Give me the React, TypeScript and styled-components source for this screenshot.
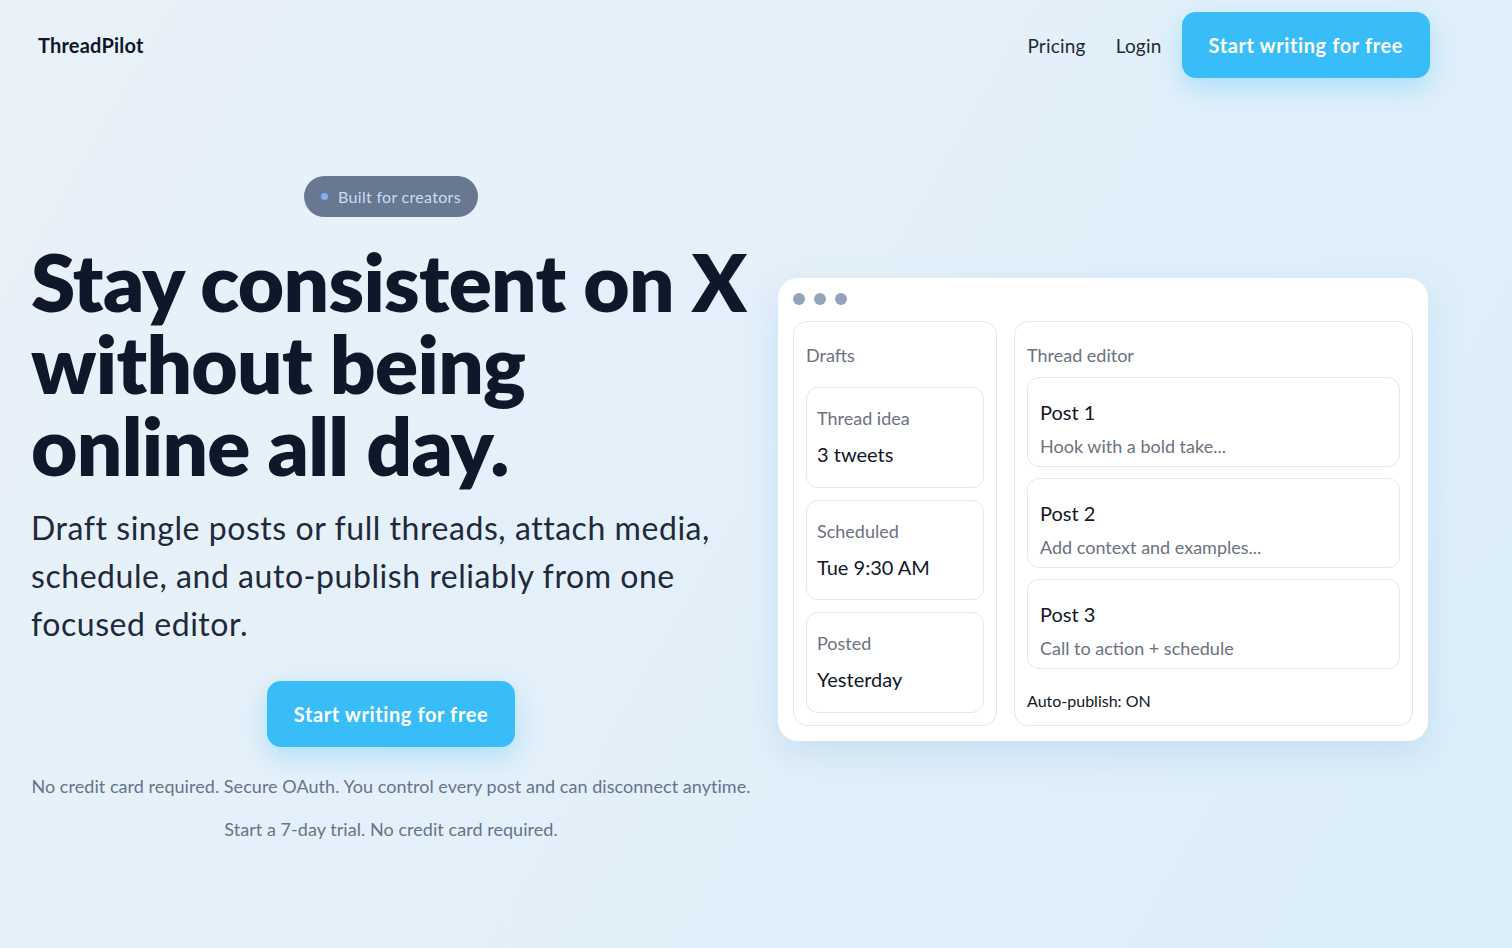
import React from 'react';
import styled, { createGlobalStyle } from 'styled-components';

const GlobalStyle = createGlobalStyle`
  * {
    box-sizing: border-box;
  }
  body {
    margin: 0;
    font-family: Lato, "Open Sans", Arial, sans-serif;
    color: #0f172a;
  }
`;

const Page = styled.div`
  min-height: 100vh;
  background: linear-gradient(120deg, #e9f1f8 0%, #e3f0fa 50%, #dbeefa 100%);
  overflow: hidden;
`;

const Header = styled.header`
  display: flex;
  align-items: center;
  justify-content: space-between;
  padding: 12px 82px 0 38px;
`;

const Logo = styled.div`
  font-size: 20px;
  font-weight: 700;
  letter-spacing: 0.2px;
  color: #0f172a;
`;

const Nav = styled.nav`
  display: flex;
  align-items: center;
  gap: 20px;
`;

const NavLinks = styled.div`
  display: flex;
  gap: 30px;
`;

const NavLink = styled.a`
  font-size: 19px;
  letter-spacing: 0.2px;
  color: #1e293b;
  text-decoration: none;
`;

const PrimaryButton = styled.button`
  height: 66px;
  padding: 0 27px;
  border: none;
  border-radius: 14px;
  background: #38bdf8;
  color: #ffffff;
  font-family: inherit;
  font-size: 20px;
  font-weight: 700;
  letter-spacing: 0.6px;
  box-shadow: 0 10px 26px rgba(56, 189, 248, 0.32);
  cursor: pointer;
`;

const Hero = styled.main`
  display: grid;
  grid-template-columns: 720px 650px;
  gap: 27px;
  align-items: center;
  padding: 98px 0 0 31px;
`;

const Copy = styled.section`
  display: flex;
  flex-direction: column;
`;

const Badge = styled.span`
  align-self: center;
  display: inline-flex;
  align-items: center;
  gap: 10px;
  height: 41px;
  padding: 0 17px;
  border-radius: 999px;
  background: #687891;
  color: #c9dcf5;
  font-size: 16px;
  letter-spacing: 0.3px;
`;

const Dot = styled.i`
  width: 7px;
  height: 7px;
  border-radius: 50%;
  background: #7fb0f5;
`;

const Headline = styled.h1`
  margin: 23px 0 0;
  font-size: 80px;
  line-height: 82px;
  font-weight: 800;
  letter-spacing: -0.7px;
  color: #0f172a;
`;

const Lead = styled.p`
  margin: 18px 0 0;
  font-size: 32px;
  line-height: 48px;
  letter-spacing: 0.55px;
  color: #1e293b;
`;

const CtaButton = styled(PrimaryButton)`
  align-self: center;
  margin-top: 33px;
`;

const Note = styled.p<{ $gap: number }>`
  margin: ${(p) => p.$gap}px 0 0;
  font-size: 18px;
  line-height: 27px;
  letter-spacing: 0.05px;
  color: #64748b;
  text-align: center;
`;

const Window = styled.div`
  background: #ffffff;
  border-radius: 20px;
  padding: 15px;
  box-shadow: 0 14px 34px rgba(125, 170, 210, 0.22);
`;

const Dots = styled.div`
  display: flex;
  gap: 9px;
  margin-bottom: 16px;

  & > span {
    width: 12px;
    height: 12px;
    border-radius: 50%;
    background: #94a3b8;
  }
`;

const Panels = styled.div`
  display: grid;
  grid-template-columns: 204px 1fr;
  gap: 17px;
`;

const Panel = styled.div`
  display: flex;
  flex-direction: column;
  border: 1px solid #e5e7eb;
  border-radius: 14px;
  padding: 20px 12px 12px;
`;

const PanelTitle = styled.div<{ $gap: number }>`
  font-size: 18px;
  line-height: 27px;
  color: #6b7280;
  margin-bottom: ${(p) => p.$gap}px;
`;

const Stack = styled.div<{ $gap: number }>`
  display: flex;
  flex-direction: column;
  gap: ${(p) => p.$gap}px;
  flex: 1;
`;

const Tile = styled.div`
  flex: 1;
  display: flex;
  flex-direction: column;
  gap: 7px;
  padding: 17px 10px 0;
  border: 1px solid #e5e7eb;
  border-radius: 12px;
`;

const TileLabel = styled.div`
  font-size: 18px;
  line-height: 27px;
  color: #6b7280;
`;

const TileValue = styled.div`
  font-size: 20px;
  line-height: 30px;
  color: #111827;
`;

const PostCard = styled.div`
  display: flex;
  flex-direction: column;
  gap: 6px;
  height: 90px;
  padding: 19px 12px 0;
  border: 1px solid #e5e7eb;
  border-radius: 12px;
`;

const PostTitle = styled.div`
  font-size: 20px;
  line-height: 30px;
  color: #111827;
`;

const PostText = styled.div`
  font-size: 18px;
  line-height: 27px;
  color: #6b7280;
`;

const Status = styled.div`
  margin-top: 20px;
  font-size: 16px;
  line-height: 24px;
  color: #111827;
`;

const drafts = [
  { label: 'Thread idea', value: '3 tweets' },
  { label: 'Scheduled', value: 'Tue 9:30 AM' },
  { label: 'Posted', value: 'Yesterday' },
];

const posts = [
  { title: 'Post 1', text: 'Hook with a bold take...' },
  { title: 'Post 2', text: 'Add context and examples...' },
  { title: 'Post 3', text: 'Call to action + schedule' },
];

export default function App() {
  return (
    <Page>
      <GlobalStyle />
      <Header>
        <Logo>ThreadPilot</Logo>
        <Nav>
          <NavLinks>
            <NavLink>Pricing</NavLink>
            <NavLink>Login</NavLink>
          </NavLinks>
          <PrimaryButton>Start writing for free</PrimaryButton>
        </Nav>
      </Header>

      <Hero>
        <Copy>
          <Badge>
            <Dot />
            Built for creators
          </Badge>
          <Headline>
            Stay consistent on X
            <br />
            without being
            <br />
            online all day.
          </Headline>
          <Lead>
            Draft single posts or full threads, attach media, schedule, and auto-publish reliably
            from one focused editor.
          </Lead>
          <CtaButton>Start writing for free</CtaButton>
          <Note $gap={26}>
            No credit card required. Secure OAuth. You control every post and can disconnect anytime.
          </Note>
          <Note $gap={16}>Start a 7-day trial. No credit card required.</Note>
        </Copy>

        <Window>
          <Dots>
            <span />
            <span />
            <span />
          </Dots>
          <Panels>
            <Panel>
              <PanelTitle $gap={18}>Drafts</PanelTitle>
              <Stack $gap={12}>
                {drafts.map((d) => (
                  <Tile key={d.label}>
                    <TileLabel>{d.label}</TileLabel>
                    <TileValue>{d.value}</TileValue>
                  </Tile>
                ))}
              </Stack>
            </Panel>
            <Panel>
              <PanelTitle $gap={8}>Thread editor</PanelTitle>
              <Stack $gap={11}>
                {posts.map((p) => (
                  <PostCard key={p.title}>
                    <PostTitle>{p.title}</PostTitle>
                    <PostText>{p.text}</PostText>
                  </PostCard>
                ))}
              </Stack>
              <Status>Auto-publish: ON</Status>
            </Panel>
          </Panels>
        </Window>
      </Hero>
    </Page>
  );
}
